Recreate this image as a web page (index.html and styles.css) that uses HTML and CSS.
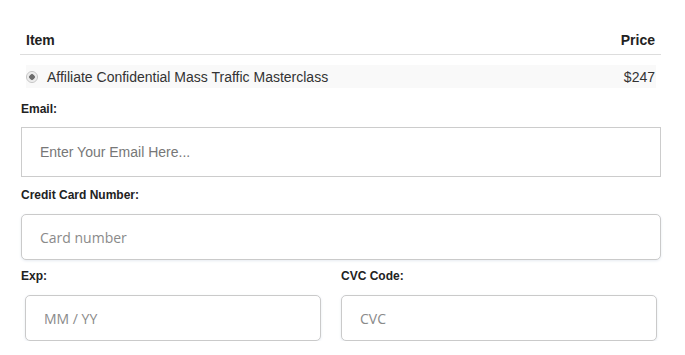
FILE: index.html
```html
<!DOCTYPE html>
<html lang="en">
<head>
<meta charset="UTF-8">
<meta name="viewport" content="width=device-width, initial-scale=1.0">
<title>Checkout</title>
<link rel="stylesheet" href="styles.css">
</head>
<body>

<div class="checkout">
    <div class="order-head">
        <span>Item</span>
        <span>Price</span>
    </div>
    <div class="order-row">
        <span class="radio"></span>
        <span class="order-name">Affiliate Confidential Mass Traffic Masterclass</span>
        <span class="order-price">$247</span>
    </div>

    <label class="field-label" for="email">Email:</label>
    <input class="email-input" type="email" id="email" placeholder="Enter Your Email Here...">

    <label class="field-label" for="card">Credit Card Number:</label>
    <input class="card-input" type="text" id="card" placeholder="Card number">

    <div class="card-extra">
        <div class="col">
            <label class="field-label label-small" for="exp">Exp:</label>
            <input class="card-input exp-input" type="text" id="exp" placeholder="MM / YY">
        </div>
        <div class="col">
            <label class="field-label label-small" for="cvc">CVC Code:</label>
            <input class="card-input cvc-input" type="text" id="cvc" placeholder="CVC">
        </div>
    </div>
</div>

</body>
</html>
```

FILE: styles.css
```css
body {
    margin: 0;
    background: #fff;
    font-family: "Liberation Sans", Arial, sans-serif;
    color: #222;
}
.checkout {
    width: 641px;
    margin-left: 20px;
    padding-top: 30px;
}
.order-head {
    display: flex;
    justify-content: space-between;
    padding: 0 6px 4px 6px;
    line-height: 20px;
    font-size: 14px;
    font-weight: bold;
    border-bottom: 1px solid #ddd;
}
.order-row {
    display: flex;
    align-items: center;
    height: 23px;
    margin: 10px 5px 0 6px;
    padding-top: 1px;
    box-sizing: border-box;
    background-color: #f9f9f9;
    font-size: 14px;
    color: #333;
}
.radio {
    width: 10px;
    height: 10px;
    margin: 0 9px 0 0;
    border: 1px solid #c4c4c4;
    border-radius: 50%;
    background: radial-gradient(circle, #6c6c6c 0, #6c6c6c 2.5px, #e4e4e4 3px, #f4f4f4 5px);
}
.order-name {
    flex: 1;
}
.order-price {
    padding-right: 1px;
}
.field-label {
    display: block;
    margin: 14px 0 11px 1px;
    font-size: 12px;
    line-height: 14px;
    font-weight: bold;
    color: #222;
}
.email-input {
    display: block;
    box-sizing: border-box;
    width: 640px;
    height: 50px;
    margin-left: 1px;
    padding: 0 18px;
    border: 1px solid #ccc;
    border-radius: 0;
    font-family: "Liberation Sans", Arial, sans-serif;
    font-size: 14px;
    outline: none;
}
.email-input::placeholder {
    color: #777;
}
.email-input + .field-label {
    margin-top: 11px;
    margin-bottom: 12px;
}
.card-input {
    display: block;
    box-sizing: border-box;
    width: 640px;
    height: 46px;
    margin-left: 1px;
    padding: 0 18px;
    border: 1px solid #cacaca;
    border-radius: 5px;
    box-shadow: 0 1px 3px 0 #e6ebf1;
    font-family: "Open Sans", sans-serif;
    font-size: 14px;
    outline: none;
}
.card-input::placeholder {
    color: #8a8a8a;
}
.card-extra {
    display: grid;
    grid-template-columns: 320px 320px;
    margin-left: 1px;
}
.label-small {
    margin: 9px 0 12px 0;
}
.exp-input {
    width: 296px;
    margin-left: 4px;
}
.cvc-input {
    width: 316px;
    margin-left: 0;
}
```
